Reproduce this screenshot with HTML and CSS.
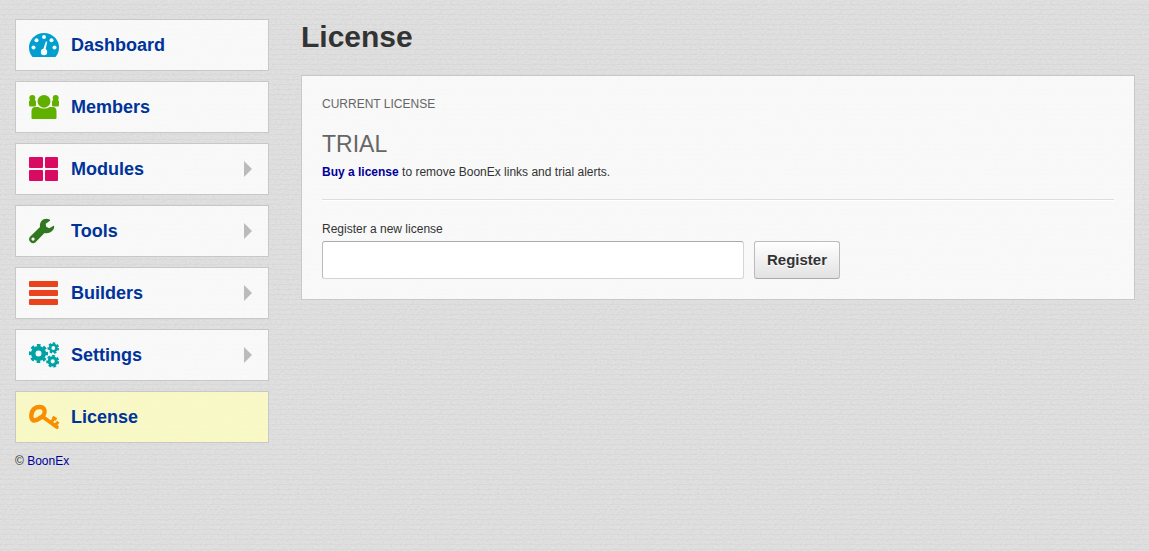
FILE: index.html
```html
<!DOCTYPE html>
<html lang="en">
<head>
<meta charset="utf-8">
<title>License</title>
<link rel="stylesheet" href="styles.css">
</head>
<body>
<div class="page">
  <aside class="sidebar">
    <nav class="menu">
      <a class="item" href="#">
        <svg class="icon dashboard" viewBox="0 0 32 32"><path fill="currentColor" d="M4.500 28C2 25 1 22 1 18.500a15 14.500 0 0 1 30 0c0 3.500-1 6.500-3.500 9.500z"/><g fill="#fafafa"><circle cx="5.500" cy="18.500" r="2"/><circle cx="8.500" cy="11.300" r="2"/><circle cx="16" cy="8" r="2"/><circle cx="23.500" cy="11.300" r="2"/><circle cx="26.500" cy="18.500" r="2"/><circle cx="16" cy="23" r="3.200"/><path d="M17.800 12.400l1.500.4-2 9-2.400-.5z"/></g></svg>
        <span>Dashboard</span>
      </a>
      <a class="item" href="#">
        <svg class="icon members" viewBox="0 0 32 32"><g fill="currentColor"><circle cx="4.300" cy="7" r="3"/><rect x="1" y="9" width="7" height="6.500" rx="1.500"/><circle cx="27.700" cy="7" r="3"/><rect x="24" y="9" width="7" height="6.500" rx="1.500"/><circle cx="16" cy="10.300" r="6.400"/><path d="M3.500 27v-7c0-2.500 1.500-4 4-4h3c3 2 8 2 11 0h3c2.500 0 4 1.500 4 4v7q0 1-1 1h-23q-1 0-1-1z"/></g></svg>
        <span>Members</span>
      </a>
      <a class="item" href="#">
        <svg class="icon modules" viewBox="0 0 32 32"><g fill="currentColor"><rect x="1" y="4" width="14" height="11" rx="1"/><rect x="17" y="4" width="13" height="11" rx="1"/><rect x="1" y="17" width="14" height="11" rx="1"/><rect x="17" y="17" width="13" height="11" rx="1"/></g></svg>
        <span>Modules</span>
        <svg class="arrow" viewBox="0 0 8 16"><path d="M0 0l8 8-8 8z"/></svg>
      </a>
      <a class="item" href="#">
        <svg class="icon tools" viewBox="0 0 32 32"><path fill="currentColor" fill-rule="evenodd" d="M22 4.700C17 1.800 11 5.500 12 12L2 21.800C.5 23.500 1 25.500 2.200 26.800 4 28.700 6 28.800 7.500 27.200L16.500 18c5 1 9.500-2 9.700-6.500q0-1-1-.5l-4 2.200-3-1.500-.5-3 4.300-3z M5 22.500a1.600 1.600 0 1 0 .1 0z"/></svg>
        <span>Tools</span>
        <svg class="arrow" viewBox="0 0 8 16"><path d="M0 0l8 8-8 8z"/></svg>
      </a>
      <a class="item" href="#">
        <svg class="icon builders" viewBox="0 0 32 32"><g fill="currentColor"><rect x="1" y="4" width="29" height="6" rx="1"/><rect x="1" y="13" width="29" height="6" rx="1"/><rect x="1" y="22" width="29" height="6" rx="1"/></g></svg>
        <span>Builders</span>
        <svg class="arrow" viewBox="0 0 8 16"><path d="M0 0l8 8-8 8z"/></svg>
      </a>
      <a class="item" href="#">
        <svg class="icon settings" viewBox="0 0 32 32"><g fill="none" stroke="currentColor"><circle cx="10.500" cy="14.500" r="5.300" stroke-width="4.600"/><circle cx="10.500" cy="14.500" r="8.200" stroke-width="2.800" stroke-dasharray="3.600 2.840" stroke-dashoffset="1.800"/><circle cx="25.300" cy="9" r="3.200" stroke-width="2.600"/><circle cx="25.300" cy="9" r="4.900" stroke-width="1.800" stroke-dasharray="2.500 1.898"/><circle cx="24.700" cy="22.300" r="3.600" stroke-width="3"/><circle cx="24.700" cy="22.300" r="5.500" stroke-width="2" stroke-dasharray="2.800 2.137"/></g></svg>
        <span>Settings</span>
        <svg class="arrow" viewBox="0 0 8 16"><path d="M0 0l8 8-8 8z"/></svg>
      </a>
      <a class="item current" href="#" aria-current="page">
        <svg class="icon key" viewBox="0 0 32 32"><g fill="none" stroke="currentColor" stroke-linejoin="round"><path stroke-width="4.400" d="M6.500 7.500C9 5.500 14 5.400 15.700 7.500 17.500 10 16.300 13.500 14.500 15.300 11 17.500 8.500 20.400 5 19.300 2.500 17.500 2.500 11 6.500 7.500z"/><path stroke-width="4" stroke-linecap="round" d="M15 16L28.800 26"/><path stroke-width="3" d="M22.500 21.500l4.500-4.500M24.500 16l4 2.500M26.800 24.800l3.500-4"/></g></svg>
        <span>License</span>
      </a>
    </nav>
    <p class="copyright">© <a href="#">BoonEx</a></p>
  </aside>
  <main class="content">
    <h1 class="title">License</h1>
    <section class="panel">
      <h2 class="caption">CURRENT LICENSE</h2>
      <div class="kind">TRIAL</div>
      <p class="note"><a href="#">Buy a license</a> to remove BoonEx links and trial alerts.</p>
      <hr class="divider">
      <form class="register">
        <label class="label" for="license">Register a new license</label>
        <div class="controls">
          <input class="field" id="license" type="text">
          <button class="button" type="button">Register</button>
        </div>
      </form>
    </section>
  </main>
</div>
</body>
</html>
```
FILE: styles.css
```css
* {
  box-sizing: border-box;
}

body {
  margin: 0;
  min-height: 100vh;
  color: #333;
  font: 12px/16px "Liberation Sans", Arial, sans-serif;
  background-color: #dedede;
  background-image:
    url("data:image/svg+xml,%3Csvg xmlns='http://www.w3.org/2000/svg' width='200' height='200'%3E%3Cfilter id='n' x='0' y='0' width='1' height='1' color-interpolation-filters='sRGB'%3E%3CfeTurbulence type='fractalNoise' baseFrequency='.4 .6' numOctaves='3' stitchTiles='stitch'/%3E%3CfeColorMatrix values='1 0 0 0 .36 0 1 0 0 .36 0 0 1 0 .36 0 0 0 0 .1'/%3E%3C/filter%3E%3Crect width='200' height='200' filter='url(%23n)'/%3E%3C/svg%3E"),
    repeating-linear-gradient(#dfdfdf 0 4px, #d9d9d9 4px 5px);
}

a {
  color: #009;
  text-decoration: none;
}

.page {
  display: flex;
  gap: 32px;
  padding: 19px 14px 0 15px;
}

.sidebar {
  flex: 0 0 254px;
}

.menu {
  display: flex;
  flex-direction: column;
  gap: 10px;
}

.item {
  display: flex;
  align-items: center;
  gap: 11px;
  height: 52px;
  padding: 0 16px 0 12px;
  border: 1px solid #c8c8c8;
  background: rgba(255, 255, 255, 0.8);
  color: #039;
  font-size: 18px;
  font-weight: bold;
  line-height: 24px;
}

.item.current {
  background: rgba(255, 255, 192, 0.8);
}

.icon {
  width: 32px;
  height: 32px;
}

.arrow {
  width: 8px;
  height: 16px;
  margin-left: auto;
  fill: #bbb;
}

.dashboard { color: #009fd0; }
.members { color: #61b000; }
.modules { color: #d80a61; }
.tools { color: #31771f; }
.builders { color: #e9421c; }
.settings { color: #00a3a5; }
.key { color: #f78f00; }

.copyright {
  margin: 10px 0 0;
}

.content {
  flex: 1;
  min-width: 0;
}

.title {
  margin: 0 0 20px;
  font-size: 30px;
  line-height: 36px;
}

.panel {
  padding: 20px;
  border: 1px solid #c8c8c8;
  background: rgba(255, 255, 255, 0.8);
}

.caption {
  margin: 0 0 17px;
  color: #666;
  font-size: 12px;
  font-weight: normal;
  line-height: 16px;
}

.kind {
  margin-bottom: 5px;
  color: #666;
  font-size: 23px;
  line-height: 30px;
}

.note {
  margin: 0;
}

.note a {
  font-weight: bold;
}

.divider {
  margin: 19px 0 20px;
  border: 0;
  border-top: 1px solid #ddd;
  border-bottom: 1px solid #fff;
}

.label {
  display: block;
  margin-bottom: 4px;
}

.controls {
  display: flex;
  gap: 10px;
}

.field {
  flex: 0 1 422px;
  min-width: 0;
  height: 38px;
  padding: 0 10px;
  border: 1px solid #d5d5d5;
  border-top-color: #aaa;
  border-left-color: #bbb;
  border-radius: 3px;
  background: #fff;
  font: inherit;
}

.button {
  height: 38px;
  padding: 0 12px;
  border: 1px solid #bbb;
  border-bottom-color: #aaa;
  border-radius: 3px;
  background: linear-gradient(#fff, #e2e2e2);
  color: #333;
  font: bold 15px/20px "Liberation Sans", Arial, sans-serif;
  text-shadow: 0 1px 0 #fff;
}
```
